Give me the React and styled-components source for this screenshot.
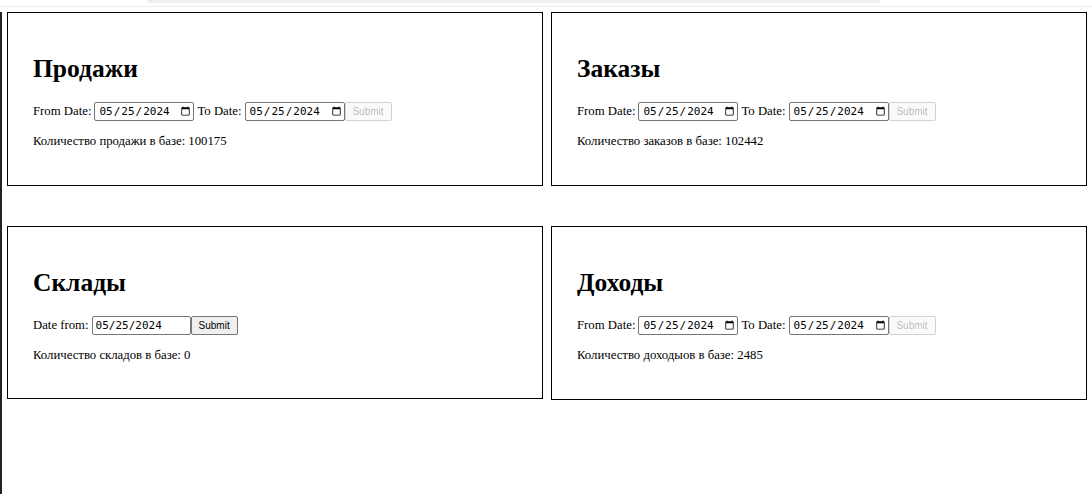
import React from "react";
import styled, { createGlobalStyle } from "styled-components";

const Global = createGlobalStyle`
  html, body { margin: 0; padding: 0; background: #fff; }
  body { font-family: "Liberation Serif", "Times New Roman", serif; color: #000; }
`;

const Page = styled.div`
  width: 1092px;
  height: 494px;
  overflow: hidden;
  display: flex;
  flex-direction: column;
`;

const TopStrip = styled.div`
  height: 6px;
  border-bottom: 1px solid #ececec;
  display: flex;
  padding-left: 147px;
`;

const ScrollStub = styled.div`
  width: 733px;
  height: 3px;
  background: #efefef;
  border-radius: 0 0 4px 4px;
`;

const Main = styled.div`
  flex: 1;
  margin-top: 5px;
  border-left: 2px solid #222;
  padding: 0 0 0 5px;
`;

const Grid = styled.div`
  display: grid;
  grid-template-columns: 536px 536px;
  column-gap: 8px;
  row-gap: 40px;
`;

const Card = styled.section`
  border: 1px solid #000;
  padding: 20px 25px;
  height: ${(p) => p.$h}px;
  box-sizing: border-box;
`;

const Title = styled.h2`
  font-size: 25.5px;
  font-weight: bold;
  margin: 21px 0 18px;
  line-height: 29px;
`;

const Row = styled.form`
  font-size: 12.75px;
  line-height: 21px;
  margin: 0;
  display: flex;
  align-items: center;
  white-space: nowrap;
`;

const Label = styled.span`
  margin-right: 3px;
`;

const DateInput = styled.input`
  font-family: "DejaVu Sans Mono", monospace;
  font-size: 11px;
  width: 100px;
  height: 19px;
  box-sizing: border-box;
  padding: 0 2px 0 3px;
  margin: 0 ${(p) => (p.$last ? "0" : "3px")} 0 0;
  border: 1px solid #767676;
  border-radius: 2px;
  color: #000;
  background: #fff;
  &::-webkit-calendar-picker-indicator {
    margin-left: 0;
    padding: 0;
    width: 11px;
    height: 11px;
  }
`;

const TextDate = styled.input`
  font-family: "DejaVu Sans Mono", monospace;
  font-size: 11px;
  width: 99px;
  height: 19px;
  box-sizing: border-box;
  padding: 0 3px;
  margin: 0;
  border: 1px solid #767676;
  border-radius: 2px;
  color: #000;
`;

const Button = styled.button`
  font-family: "Liberation Sans", Arial, sans-serif;
  font-size: 10px;
  height: 19px;
  width: 47px;
  padding: 0;
  margin: 0;
  border: 1px solid #767676;
  border-radius: 2px;
  background: #efefef;
  color: #000;
  &:disabled {
    color: rgba(16, 16, 16, 0.3);
    background: rgba(239, 239, 239, 0.3);
    border-color: rgba(118, 118, 118, 0.3);
  }
`;

const Count = styled.p`
  font-size: 12.75px;
  margin: 12px 0 0;
  line-height: 15px;
`;

function RangeCard({ title, noun, count }) {
  return (
    <Card $h={174}>
      <Title>{title}</Title>
      <Row onSubmit={(e) => e.preventDefault()}>
        <Label>From Date:</Label>
        <DateInput type="date" defaultValue="2024-05-25" />
        <Label>To Date:</Label>
        <DateInput $last type="date" defaultValue="2024-05-25" />
        <Button type="submit" disabled>
          Submit
        </Button>
      </Row>
      <Count>
        Количество {noun} в базе: {count}
      </Count>
    </Card>
  );
}

export default function App() {
  return (
    <>
      <Global />
      <Page>
        <TopStrip>
          <ScrollStub />
        </TopStrip>
        <Main>
          <Grid>
            <RangeCard title="Продажи" noun="продажи" count="100175" />
            <RangeCard title="Заказы" noun="заказов" count="102442" />
            <Card $h={173}>
              <Title>Склады</Title>
              <Row onSubmit={(e) => e.preventDefault()}>
                <Label>Date from:</Label>
                <TextDate type="text" defaultValue="05/25/2024" />
                <Button type="submit">Submit</Button>
              </Row>
              <Count>Количество складов в базе: 0</Count>
            </Card>
            <RangeCard title="Доходы" noun="доходыов" count="2485" />
          </Grid>
        </Main>
      </Page>
    </>
  );
}
